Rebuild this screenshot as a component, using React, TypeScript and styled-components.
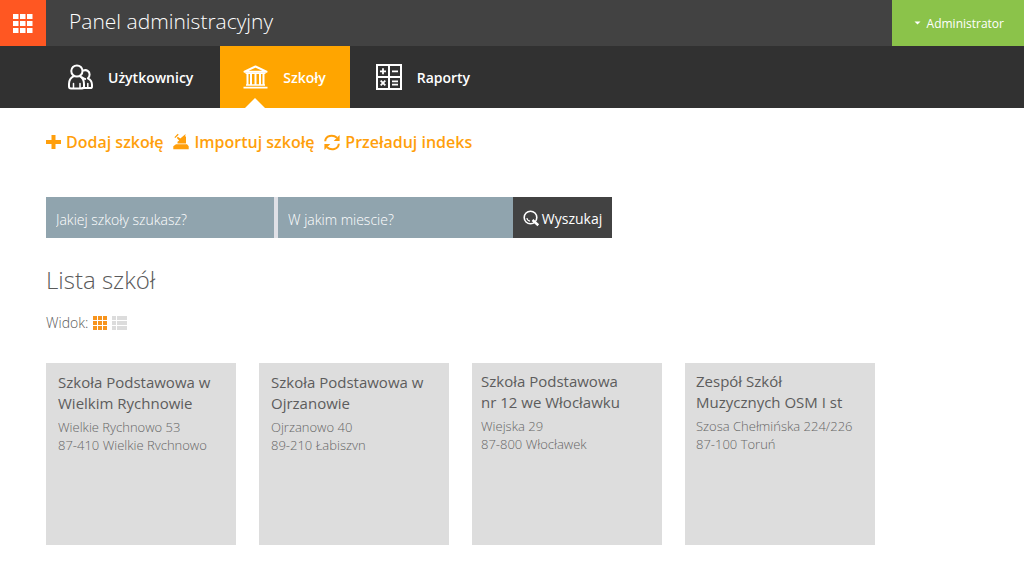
import React from "react";
import styled, { createGlobalStyle } from "styled-components";

const GlobalStyle = createGlobalStyle`
  * { box-sizing: border-box; }
  body {
    margin: 0;
    background: #fff;
    color: #5a5a5a;
    font-family: "Open Sans", "Noto Sans", sans-serif;
  }
  button, input { font-family: inherit; border: 0; border-radius: 0; }
  h1, h2, h3, p { margin: 0; }
  svg { display: block; flex: none; }
`;

const TopBar = styled.header`
  display: flex;
  height: 46px;
  background: #424242;
`;

const AppsButton = styled.button`
  display: flex;
  align-items: center;
  justify-content: center;
  width: 46px;
  padding: 0;
  background: #ff5722;
  cursor: pointer;
`;

const PanelTitle = styled.h1`
  flex: 1;
  padding: 0 23px;
  color: #fff;
  font-size: 21px;
  font-weight: 300;
  line-height: 42px;
`;

const UserButton = styled.button`
  display: flex;
  align-items: center;
  justify-content: flex-end;
  gap: 6px;
  width: 132px;
  padding: 0 20px 0 0;
  background: #8bc34a;
  color: #fff;
  font-size: 12px;
  font-weight: 400;
  cursor: pointer;
`;

const MainNav = styled.nav`
  display: flex;
  gap: 3px;
  padding: 0 45px;
  background: #313131;
`;

const NavLink = styled.a<{ $active?: boolean }>`
  position: relative;
  display: flex;
  align-items: center;
  gap: 15px;
  height: 62px;
  padding: 0 24px 0 23px;
  background: ${(p) => (p.$active ? "#ffa500" : "transparent")};
  color: #fff;
  font-size: 14px;
  font-weight: 600;
  text-decoration: none;

  &::after {
    content: "";
    display: ${(p) => (p.$active ? "block" : "none")};
    position: absolute;
    left: 25px;
    bottom: 0;
    border: 10px solid transparent;
    border-top-width: 0;
    border-bottom-color: #fff;
  }
`;

const Content = styled.main`
  padding: 20px 46px 27px;
`;

const Actions = styled.div`
  display: flex;
  flex-wrap: wrap;
  gap: 10px;
`;

const ActionLink = styled.a`
  display: flex;
  align-items: center;
  gap: 5px;
  color: #ff9f0c;
  font-size: 16px;
  font-weight: 600;
  line-height: 28px;
  text-decoration: none;
`;

const SearchForm = styled.form`
  display: flex;
  max-width: 566px;
  height: 41px;
  margin-top: 41px;
`;

const SearchInput = styled.input<{ $divided?: boolean }>`
  flex: 1 1 ${(p) => (p.$divided ? "232px" : "235px")};
  min-width: 0;
  padding: 3px 10px 0;
  border-right: ${(p) => (p.$divided ? "4px solid #dfe0e6" : "0")};
  background: #90a4ae;
  color: #fff;
  font-size: 14px;
  font-weight: 300;

  &::placeholder { color: #fff; opacity: 1; }
`;

const SearchButton = styled.button`
  display: flex;
  flex: none;
  align-items: center;
  justify-content: center;
  gap: 2px;
  width: 99px;
  padding: 2px 0 0;
  background: #424242;
  color: #fff;
  font-size: 14px;
  cursor: pointer;
`;

const ListTitle = styled.h2`
  margin-top: 24px;
  font-size: 24px;
  font-weight: 300;
  line-height: 36px;
`;

const ViewSwitch = styled.div`
  display: flex;
  align-items: center;
  gap: 5px;
  margin-top: 14px;
  font-size: 14px;
  font-weight: 300;
  line-height: 22px;
`;

const ViewButton = styled.button<{ $active?: boolean }>`
  padding: 0;
  background: none;
  color: ${(p) => (p.$active ? "#f7941d" : "#dcdcdc")};
  cursor: pointer;
`;

const SchoolGrid = styled.div`
  display: grid;
  grid-template-columns: repeat(auto-fill, 190px);
  gap: 23px;
  margin-top: 29px;
`;

const SchoolCard = styled.article<{ $padding: string }>`
  min-height: 182px;
  padding: ${(p) => p.$padding};
  background: #ddd;
`;

const SchoolName = styled.h3`
  color: #5c5c5c;
  font-size: 15px;
  font-weight: 400;
  line-height: 21px;
  white-space: pre-line;
`;

const Address = styled.p<{ $clipped?: boolean }>`
  max-height: ${(p) => (p.$clipped ? "32px" : "none")};
  margin-top: 4px;
  overflow: hidden;
  color: #666;
  font-size: 13px;
  font-weight: 300;
  line-height: 18px;
  white-space: pre-line;
`;

const AppsIcon = () => (
  <svg width="20" height="19" viewBox="0 0 20 19" fill="#fff" aria-hidden="true">
    {[0, 7, 14].map((y) =>
      [0, 7, 14].map((x) => <rect key={`${x}-${y}`} x={x} y={y} width="5.5" height="5" />)
    )}
  </svg>
);

const CaretIcon = () => (
  <svg width="7" height="4" viewBox="0 0 7 4" fill="#fff" aria-hidden="true">
    <path d="M0.5 0.5h6L3.5 3.5z" />
  </svg>
);

const UsersIcon = () => (
  <svg width="25" height="26" viewBox="0 0 25 26" fill="none" stroke="#fff" strokeWidth="2" strokeLinejoin="round" strokeLinecap="round" aria-hidden="true">
    <circle cx="8.900" cy="7" r="5.600" />
    <path d="M5.800 12.200C2.800 13.700 1 16.700 1 20v2.400c0 1.400.8 2 2 2h11c1.300 0 2-.6 2-2V20c0-3.300-1.500-6.200-4.200-7.800" />
    <path d="M15.400 6.500c3.300-1.200 6.200.8 6.200 3.900 0 1.600-.6 2.900-1.700 3.900 2.400 1.100 4.100 3.700 4.100 6.500v1.600c0 1.100-.7 1.700-1.700 1.700h-8M14.200 13.500c1 .9 2 1.300 3 1.400" />
    <path d="M5.500 19.500v4.500M12 19.500v4.500M19.800 19.500v4.500" strokeWidth="1.500" />
  </svg>
);

const SchoolIcon = () => (
  <svg width="25" height="24" viewBox="0 0 25 24" fill="none" stroke="#fff" aria-hidden="true">
    <path d="M1.500 6.700L12.500 1.500l11 5.200z" strokeWidth="2" strokeLinejoin="round" />
    <path d="M2.500 8.300h20M3 20h19M.5 22.600h24" strokeWidth="1.600" />
    <path d="M4.500 8v12M8 8v12M12.500 8v12M17 8v12M20.500 8v12" strokeWidth="2" />
  </svg>
);

const ReportsIcon = () => (
  <svg width="26" height="26" viewBox="0 0 26 26" fill="none" stroke="#fff" aria-hidden="true">
    <path d="M1 1h24v24H1zM13 1v24M1 13h24" strokeWidth="2" />
    <path d="M4 7.300h6M7 4.300v6M16 7.300h6M4.700 16.700l4.600 4.600M9.300 16.700l-4.600 4.600M16 17.400h6M16 20.600h6" strokeWidth="1.800" />
  </svg>
);

const PlusIcon = () => (
  <svg width="15" height="16" viewBox="0 0 15 16" fill="currentColor" aria-hidden="true">
    <path d="M5.500 1h4v5H15v4H9.500v5h-4v-5H0V6h5.500z" />
  </svg>
);

const ImportIcon = () => (
  <svg width="16" height="18" viewBox="0 0 16 18" fill="currentColor" aria-hidden="true">
    <path d="M1.400 4.200L4.700.8l1 .9-3.400 3.400zM4.800 3.800l2.500 1.600L12.600 1l-.5 2.500H13v7H4.500V8.800l1.700-1.300L3.800 5zM3 11.200h11l1.700 2v3H.3v-3z" />
  </svg>
);

const ReloadIcon = () => (
  <svg width="16" height="17" viewBox="0 0 16 17" fill="currentColor" aria-hidden="true">
    <path d="M1.200 7.200C1.500 1.500 9 .2 13 3.800M14.800 9.800C14.500 15.500 7 16.800 3 13.200" fill="none" stroke="currentColor" strokeWidth="2" />
    <path d="M15.600 1v6H9.700zM.4 16v-6h5.900z" />
  </svg>
);

const SearchIcon = () => (
  <svg width="17" height="17" viewBox="0 0 17 17" fill="none" stroke="#fff" aria-hidden="true">
    <circle cx="7.500" cy="7.500" r="6.300" strokeWidth="1.600" />
    <path d="M3.900 8A3.600 3.600 0 0 0 7 11.100" strokeWidth="1.100" />
    <path d="M9.500 10l5.800 5.200" strokeWidth="2.500" />
  </svg>
);

const GridIcon = () => (
  <svg width="14" height="14" viewBox="0 0 14 14" fill="currentColor" aria-hidden="true">
    {[0, 5, 10].map((y) =>
      [0, 5, 10].map((x) => <rect key={`${x}-${y}`} x={x} y={y} width="4" height="4" />)
    )}
  </svg>
);

const ListIcon = () => (
  <svg width="15" height="14" viewBox="0 0 15 14" fill="currentColor" aria-hidden="true">
    {[0, 5, 10].map((y) => (
      <path key={y} d={`M0 ${y}h4v4H0zM5 ${y}h10v4H5z`} />
    ))}
  </svg>
);

const schools = [
  { name: "Szkoła Podstawowa w\nWielkim Rychnowie", address: "Wielkie Rychnowo 53\n87-410 Wielkie Rychnowo", padding: "9px 12px", clipped: true },
  { name: "Szkoła Podstawowa w\nOjrzanowie", address: "Ojrzanowo 40\n89-210 Łabiszyn", padding: "9px 12px", clipped: true },
  { name: "Szkoła Podstawowa\nnr 12 we Włocławku", address: "Wiejska 29\n87-800 Włocławek", padding: "8px 9px" },
  { name: "Zespół Szkół\nMuzycznych OSM I st", address: "Szosa Chełmińska 224/226\n87-100 Toruń", padding: "8px 11px" },
];

export default function App() {
  return (
    <>
      <GlobalStyle />
      <TopBar>
        <AppsButton aria-label="Menu"><AppsIcon /></AppsButton>
        <PanelTitle>Panel administracyjny</PanelTitle>
        <UserButton><CaretIcon />Administrator</UserButton>
      </TopBar>
      <MainNav>
        <NavLink href="#uzytkownicy"><UsersIcon />Użytkownicy</NavLink>
        <NavLink href="#szkoly" $active aria-current="page"><SchoolIcon />Szkoły</NavLink>
        <NavLink href="#raporty"><ReportsIcon />Raporty</NavLink>
      </MainNav>
      <Content>
        <Actions>
          <ActionLink href="#dodaj"><PlusIcon />Dodaj szkołę</ActionLink>
          <ActionLink href="#importuj"><ImportIcon />Importuj szkołę</ActionLink>
          <ActionLink href="#przeladuj"><ReloadIcon />Przeładuj indeks</ActionLink>
        </Actions>
        <SearchForm onSubmit={(e) => e.preventDefault()}>
          <SearchInput $divided aria-label="Jakiej szkoły szukasz?" placeholder="Jakiej szkoły szukasz?" />
          <SearchInput aria-label="W jakim miescie?" placeholder="W jakim miescie?" />
          <SearchButton type="submit"><SearchIcon />Wyszukaj</SearchButton>
        </SearchForm>
        <ListTitle>Lista szkół</ListTitle>
        <ViewSwitch>
          <span>Widok:</span>
          <ViewButton $active aria-label="Siatka"><GridIcon /></ViewButton>
          <ViewButton aria-label="Lista"><ListIcon /></ViewButton>
        </ViewSwitch>
        <SchoolGrid>
          {schools.map((s) => (
            <SchoolCard key={s.name} $padding={s.padding}>
              <SchoolName>{s.name}</SchoolName>
              <Address $clipped={s.clipped}>{s.address}</Address>
            </SchoolCard>
          ))}
        </SchoolGrid>
      </Content>
    </>
  );
}
